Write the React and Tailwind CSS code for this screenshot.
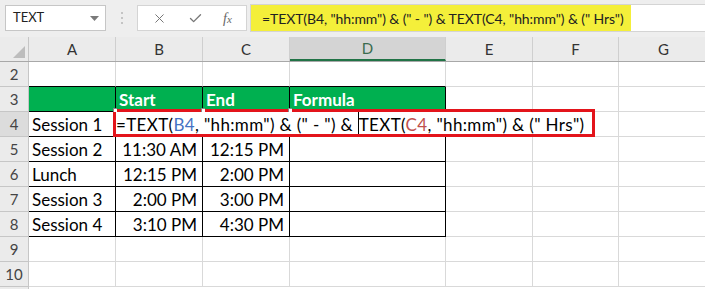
import { X, Check } from "lucide-react";

const font = { fontFamily: "Lato, 'Liberation Sans', sans-serif" };

const COLS = [
    { key: "A", cls: "w-[87px]" },
    { key: "B", cls: "w-[87px]" },
    { key: "C", cls: "w-[87px]" },
    { key: "D", cls: "w-[156px]" },
    { key: "E", cls: "w-[87px]" },
    { key: "F", cls: "w-[86px]" },
    { key: "G", cls: "w-[90px]" },
];

const ROWS = [
    { n: 2, cells: ["", "", "", ""] },
    { n: 3, cells: ["", "Start", "End", "Formula"], head: true },
    { n: 4, special: true },
    { n: 5, cells: ["Session 2", "11:30 AM", "12:15 PM", ""] },
    { n: 6, cells: ["Lunch", "12:15 PM", "2:00 PM", ""] },
    { n: 7, cells: ["Session 3", "2:00 PM", "3:00 PM", ""] },
    { n: 8, cells: ["Session 4", "3:10 PM", "4:30 PM", ""] },
    { n: 9, cells: [] },
    { n: 10, cells: [] },
];

const RowHead = ({ n, active }) => (
    <div className={`w-[29px] shrink-0 h-full flex items-center justify-center border-r border-b border-[#c6c6c6] text-[15px] text-[#444] ${active ? "bg-[#dcdcdc]" : "bg-[#ebebeb]"}`}>
        {n}
    </div>
)

const FormulaBar = () => (
    <div className="h-[37px] bg-[#eeeeee] flex items-start pt-[5px] pl-[5px]">
        <div className="w-[101px] h-[26px] bg-white border border-[#c6c6c6] flex items-center justify-between pl-[7px] pr-[6px]">
            <span className="text-[13px] text-[#222]">TEXT</span>
            <svg width="9" height="5" viewBox="0 0 9 5"><path d="M0 0 L9 0 L4.5 5 Z" fill="#7a7a7a" /></svg>
        </div>
        <div className="w-[31px] h-[26px] flex flex-col items-center justify-center gap-[3px]">
            <span className="w-[2px] h-[2px] bg-[#c4c4c4]"></span>
            <span className="w-[2px] h-[2px] bg-[#c4c4c4]"></span>
            <span className="w-[2px] h-[2px] bg-[#c4c4c4]"></span>
        </div>
        <div className="w-[110px] h-[26px] bg-white border border-[#d4d4d4] flex items-center justify-around px-[4px]">
            <X size={15} strokeWidth={1.6} color="#777" />
            <Check size={15} strokeWidth={2.2} color="#777" />
            <span className="text-[14px] italic text-[#666]" style={{ fontFamily: "'Liberation Serif', serif" }}>f<span className="text-[11px]">x</span></span>
        </div>
        <div className="flex-1 h-[28px] -mt-[1px] ml-[3px] bg-white border-y border-l border-[#d4d4d4] flex items-stretch">
            <div className="w-[380px] bg-[#f4ef3a] flex items-center pl-[11px] text-[14px] text-[#222] whitespace-nowrap tracking-[-0.1px]">
                =TEXT(B4, "hh:mm") &amp; (" - ") &amp; TEXT(C4, "hh:mm") &amp; (" Hrs")
            </div>
        </div>
    </div>
)

const ColHeaders = () => (
    <div className="h-[25px] flex bg-[#ebebeb] border-b border-[#a8a8a8]">
        <div className="w-[29px] shrink-0 h-full border-r border-[#c6c6c6] flex items-end justify-end pr-[3px] pb-[3px]">
            <svg width="12" height="12" viewBox="0 0 12 12"><path d="M12 0 L12 12 L0 12 Z" fill="#bdbdbd" /></svg>
        </div>
        {COLS.map((c) => (
            <div
                key={c.key}
                className={`${c.cls} shrink-0 h-full flex items-center justify-center border-r border-[#cfcfcf] text-[15px] ${c.key === "D" ? "bg-[#d4d4d4] text-[#3a6b4d] border-b-2 border-b-[#217346]" : "text-[#333]"}`}
            >
                {c.key}
            </div>
        ))}
    </div>
)

const Row = ({ row }) => {
    const inTable = row.n >= 3 && row.n <= 8;
    const above = row.n === 2;
    return (
        <div className="h-[25px] flex">
            <RowHead n={row.n} />
            {COLS.map((c, i) => {
                const t = i < 4 && (inTable || above);
                const text = row.cells[i] || "";
                const bb = t ? "border-b-black" : "border-b-[#d9d9d9]";
                const br = i < 4 && inTable ? "border-r-black" : "border-r-[#d9d9d9]";
                const right = i === 1 || i === 2;
                return (
                    <div
                        key={c.key}
                        className={`${c.cls} shrink-0 h-full border-r border-b ${bb} ${br} flex items-center px-[3px] whitespace-nowrap ${row.head && i < 4 ? "bg-[#00b050] text-white font-bold" : "text-black"} ${right && !row.head ? "justify-end pr-[5px]" : ""} text-[17px] pt-[2px]`}
                    >
                        {text}
                    </div>
                );
            })}
        </div>
    )
}

const EditRow = () => (
    <div className="h-[25px] flex">
        <RowHead n={4} active />
        <div className="w-[87px] shrink-0 h-full border-r border-b border-black flex items-center px-[3px] text-[17px] pt-[2px]">Session 1</div>
        <div className="w-[503px] shrink-0 h-full border-r border-b border-[#d9d9d9] relative flex items-center text-[17px] pt-[2px] whitespace-pre tracking-[0.35px]">
            <span>=TEXT(<span className="text-[#4472c4]">B4</span>, "hh:mm") &amp; (" - ") &amp;{"\u00a0"}</span>
            <span className="inline-block w-px h-[24px] bg-black -mt-[2px]"></span>
            <span>TEXT(<span className="text-[#c0504d]">C4</span>, "hh:mm") &amp; (" Hrs")</span>
            <div className="absolute left-[-3px] top-[-3px] w-[482px] h-[28px] border-[3px] border-[#e3141b]"></div>
            <div className="absolute left-[-3px] top-[-4px] w-[4px] h-[4px] border-l border-t border-[#888] bg-white"></div>
            <div className="absolute left-[85px] top-[-4px] w-[4px] h-[4px] border-l border-t border-[#888] bg-white"></div>
            <div className="absolute left-[172px] top-[-4px] w-[4px] h-[4px] border-l border-t border-[#888] bg-white"></div>
        </div>
        <div className="w-[90px] shrink-0 h-full border-r border-b border-[#d9d9d9]"></div>
    </div>
)

export default function App() {
    return (
        <div className="w-[705px] h-[289px] overflow-hidden bg-white" style={font}>
            <FormulaBar />
            <ColHeaders />
            {ROWS.map((r) => (r.special ? <EditRow key={r.n} /> : <Row key={r.n} row={r} />))}
            <div className="h-[2px] flex">
                <div className="w-[29px] h-full bg-[#ebebeb] border-r border-[#c6c6c6]"></div>
            </div>
        </div>
    )
}
